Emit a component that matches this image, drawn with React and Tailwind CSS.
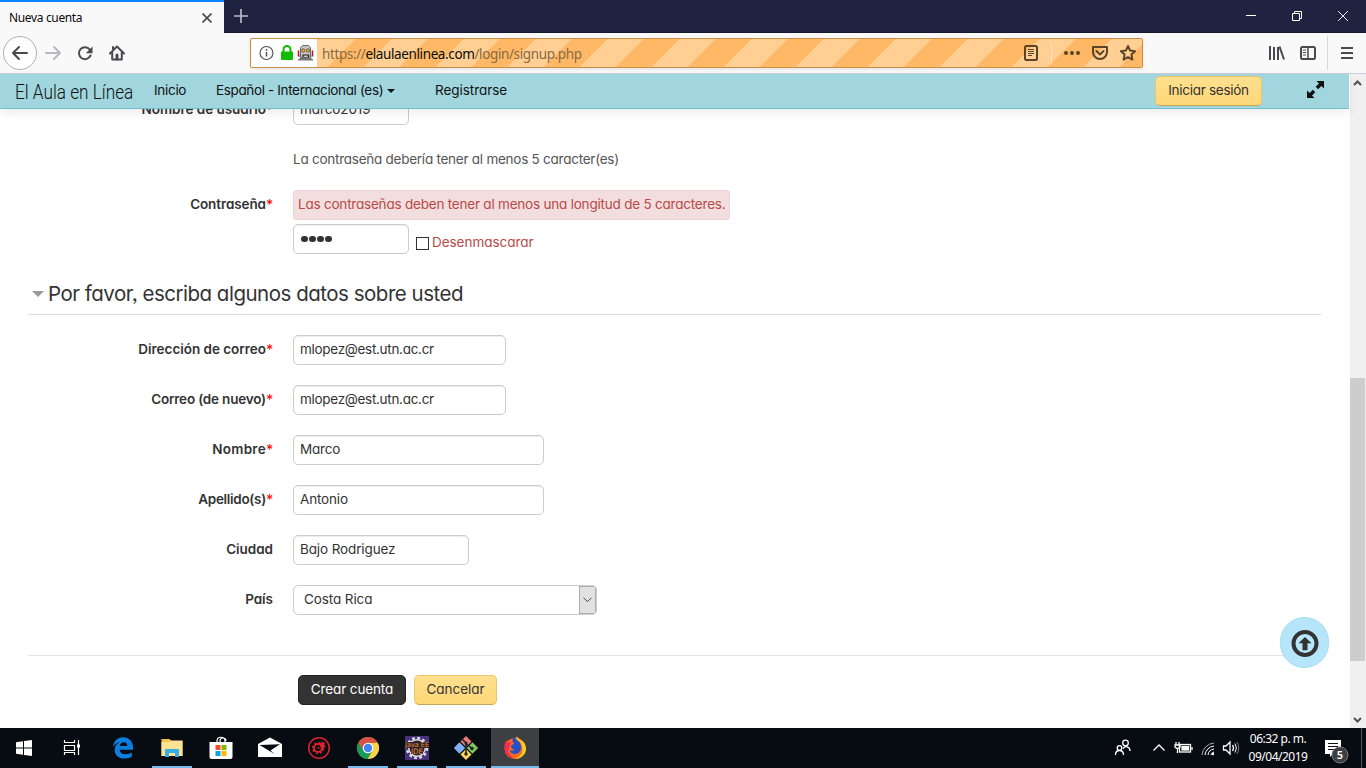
import React from "react";

const pageFont = "font-['Inter'] [font-feature-settings:'cv11','ss03']";

function Label({ children, required = true, track }) {
  return (
    <div className={"w-[273px] shrink-0 text-right text-[13.5px] font-semibold text-[#333] whitespace-nowrap " + (required ? "leading-[27px] " : "leading-[29px] ") + (track || "tracking-[-0.03px]")}>
      {children}
      {required && <span className="inline-block translate-y-px text-[14px] font-medium tracking-[-0.2px] text-[#f11]">*</span>}
    </div>
  );
}

function Input({ children, width, track }) {
  return (
    <div className={"h-[30px] rounded-[5px] border border-[#ccc] bg-white pl-[6px] text-[13.5px] leading-[26px] text-[#333] whitespace-nowrap shadow-[inset_0_1px_1px_rgba(0,0,0,0.075)] " + width + " " + (track || "tracking-[-0.17px]")}>
      {children}
    </div>
  );
}

function Row({ label, required, width, value, track, inputTrack }) {
  return (
    <div className="flex h-[30px] gap-5">
      <Label required={required} track={track}>{label}</Label>
      <Input width={width} track={inputTrack}>{value}</Input>
    </div>
  );
}

function TitleBar() {
  return (
    <div className="flex h-[33px] shrink-0 justify-between border-b border-[#15172c] bg-[#202340]">
      <div className="flex">
        <div className="-mb-px flex h-[33px] w-[224px] items-center justify-between border-t-2 border-[#0a84ff] bg-[#f9f9fa] pl-[9px] pr-[12px]">
          <span className="font-['Noto_Sans'] text-[12px] tracking-[-0.35px] text-[#0c0c0d]">Nueva cuenta</span>
          <svg width="10" height="10" viewBox="0 0 10 10" className="text-[#4a4a4d]"><path d="M.5.500l9 9M9.500.500L.5 9.500" stroke="currentColor" strokeWidth="1.6" /></svg>
        </div>
        <svg width="34" height="32" viewBox="0 0 34 32"><path d="M17 9v14M10 16h14" stroke="#b9bac6" strokeWidth="1.7" /></svg>
      </div>
      <div className="flex text-white">
        <svg width="46" height="32" viewBox="0 0 46 32"><path d="M18 15.500h10" stroke="currentColor" /></svg>
        <svg width="46" height="32" viewBox="0 0 46 32" fill="none" stroke="currentColor"><path d="M18.500 13.500h7v7h-7zM20.500 13.500v-2h7v7h-2" /></svg>
        <svg width="46" height="32" viewBox="0 0 46 32"><path d="M18 11l10 10M28 11L18 21" stroke="currentColor" strokeWidth=".9" /></svg>
      </div>
    </div>
  );
}

function Toolbar() {
  return (
    <div className="flex h-[41px] shrink-0 items-center border-b border-[#ccd] bg-[#f9f9fa]">
      <div className="flex w-[250px] items-center">
        <svg width="128" height="40" viewBox="0 0 128 40" fill="none">
          <circle cx="20" cy="20" r="16.500" fill="#fff" stroke="#b1b1b3" />
          <g strokeWidth="2" strokeLinecap="round" strokeLinejoin="round">
            <path d="M27 20H13m6-6l-6 6 6 6" stroke="#4a4a4d" />
            <path d="M46 20h14m-6-6l6 6-6 6" stroke="#b9b9bb" />
            <path d="M89.700 16.500a6 6 0 1 0 .8 6" stroke="#4a4a4d" />
            <path d="M92.500 13.500v6.700h-6.700z" fill="#4a4a4d" stroke="none" />
            <path d="M110 20.500l7-7 7 7" stroke="#4a4a4d" />
            <path d="M112.200 19.500v7h9.600v-7" stroke="#4a4a4d" />
            <path d="M117 26v-4" stroke="#4a4a4d" strokeWidth="3" />
            <path d="M113 14v2" stroke="#4a4a4d" />
          </g>
        </svg>
      </div>
      <div className="flex h-[30px] w-[893px] overflow-hidden rounded-[2px] border border-[#c98f47] bg-white shadow-[0_1px_3px_rgba(0,0,0,0.1)]">
        <svg width="66" height="28" viewBox="0 0 66 28" className="shrink-0" fill="none">
          <circle cx="15.500" cy="14" r="6.500" stroke="#555" strokeWidth="1.200" />
          <path d="M15.500 13v4.500M15.500 10v1.700" stroke="#555" strokeWidth="1.500" />
          <rect x="30" y="12.500" width="12" height="8.500" rx="1" fill="#12bc00" />
          <path d="M32.500 13v-2.500a3.500 3.500 0 0 1 7 0V13" stroke="#12bc00" strokeWidth="2" />
          <path d="M47.500 11.500v6M61.500 11.500v6" stroke="#c3122d" strokeWidth="1.600" />
          <path d="M48 17h3M58 17h3" stroke="#777" />
          <path d="M49.500 8.500l2-2h6l2 2v10h-10z" fill="#c4c4c4" stroke="#666" />
          <circle cx="52.300" cy="11.500" r="1.700" fill="#f5a623" stroke="#444" strokeWidth=".7" />
          <circle cx="57" cy="11.500" r="1.700" fill="#f5a623" stroke="#444" strokeWidth=".7" />
          <path d="M52 18v-2h5.500v2" stroke="#222" strokeWidth="1.200" />
          <path d="M47 21.500h15v-1l-2-1.500h-11l-2 1.500z" fill="#777" />
        </svg>
        <div className="flex flex-1 items-center justify-between bg-[repeating-linear-gradient(135deg,#ffb966_0px,#ffb966_1.6px,#ffcf94_1.6px,#ffcf94_27px,#ffb966_27px,#ffb966_50.9px)] pl-[5px]">
          <span className="pt-[2px] font-['Noto_Sans'] text-[13.5px] text-[#8a6a43] tracking-[-0.38px] whitespace-nowrap">
            https://<span className="text-[#0c0c0d]">elaulaenlinea.com</span>/login/signup.php
          </span>
          <svg width="121" height="28" viewBox="0 0 121 28" fill="none" stroke="#5c4426" strokeWidth="2" strokeLinejoin="round">
            <rect x="4" y="7" width="12" height="14" rx="1.500" />
            <path d="M7 10.500h6M7 12.500h6M7 14.500h6M7 16.500h4" strokeWidth="1" />
            <path d="M30.500 3v22" stroke="#ffe2bd" strokeWidth="1" />
            <g fill="#5c4426" stroke="none"><circle cx="45" cy="14" r="2" /><circle cx="51" cy="14" r="2" /><circle cx="57" cy="14" r="2" /></g>
            <path d="M72 8h14v5a7 7 0 0 1-14 0z" />
            <path d="M75.500 12l3.500 3.500 3.500-3.500" strokeLinecap="round" />
            <path d="M107 7l2.100 4.600 5 .6-3.700 3.400 1 5-4.400-2.500-4.400 2.500 1-5-3.700-3.400 5-.6z" />
          </svg>
        </div>
      </div>
      <svg width="223" height="40" viewBox="0 0 223 40" fill="none" stroke="#4a4a4d" strokeWidth="2">
        <path d="M127 13v14M131 14v13M135 14v13M136.500 13.500l4.500 13" />
        <rect x="158" y="14" width="14" height="12" rx="1.500" />
        <path d="M165 14v12" strokeWidth="1.500" /><path d="M160 17h3M160 19.500h3M160 22h3" strokeWidth="1" />
        <path d="M184.500 3v34" stroke="#d8d8da" strokeWidth="1" />
        <path d="M198 15h12M198 20h12M198 25h12" />
      </svg>
    </div>
  );
}

function NavBar() {
  return (
    <div className={"z-10 flex h-[35px] shrink-0 items-center border-b border-[#6fc0cc] bg-[#a1d6de] text-[13.5px] leading-[20px] text-[#111] shadow-[0_4px_10px_rgba(0,0,0,0.08)] whitespace-nowrap " + pageFont}>
      <div className="ml-[15px] w-[139px] pt-[2px]">
        <div className="w-[150px] origin-left scale-x-[0.86] font-['Roboto'] text-[20px] font-light">El Aula en Línea</div>
      </div>
      <div className="w-[62px] pb-[2px] tracking-[-0.3px]">Inicio</div>
      <div className="flex w-[219px] items-center gap-[4px] pb-[2px] tracking-[-0.36px]">
        Español - Internacional (es)
        <svg width="8" height="4" viewBox="0 0 8 4" className="mt-[2px]"><path d="M0 0h8L4 4z" fill="#111" /></svg>
      </div>
      <div className="flex-1 pb-[2px] tracking-[-0.05px]">Registrarse</div>
      <div className="mr-[44px] h-[30px] w-[107px] rounded-[5px] border border-[#e9c669] border-b-[#c3a757] bg-linear-to-b from-[#ffe08f] to-[#ffd877] text-center leading-[26px] tracking-[-0.28px] text-[#333]">Iniciar sesión</div>
      <svg width="19" height="19" viewBox="0 0 19 19" className="mr-[24px] mb-[3px]" fill="#111">
        <path d="M10.500 1H18v7.500l-2.600-2.600-3.300 3.300-2.400-2.400 3.300-3.300zM8.500 18H1v-7.500l2.600 2.600 3.300-3.300 2.400 2.400L6 15.500z" />
      </svg>
    </div>
  );
}

function SignupForm() {
  return (
    <div className={"flex min-h-0 flex-1 flex-col overflow-hidden bg-white text-[13.5px] text-[#333] " + pageFont}>
      <div className="-mt-[14px] shrink-0"><Row label="Nombre de usuario" value="marco2019" width="w-[116px]" inputTrack="tracking-[-0.1px]" /></div>
      <div className="mt-[20px] ml-[293px] h-[30px] leading-[28px] tracking-[-0.25px] text-[#555]">La contraseña debería tener al menos 5 caracter(es)</div>
      <div className="mt-[15px] flex h-[64px] gap-5">
        <Label track="tracking-[-0.1px]">Contraseña</Label>
        <div className="text-[#b94a48]">
          <div className="h-[30px] w-[437px] rounded-[3px] border border-[#eed3d7] bg-[#f2dede] pl-[4px] leading-[26px] tracking-[-0.21px] whitespace-nowrap">Las contraseñas deben tener al menos una longitud de 5 caracteres.</div>
          <div className="mt-[4px] flex">
            <div className="flex h-[30px] w-[116px] items-center gap-[1.5px] rounded-[5px] border border-[#ccc] pl-[7px] shadow-[inset_0_1px_1px_rgba(0,0,0,0.075)]">
              {[0, 1, 2, 3].map((i) => <span key={i} className="size-[6.5px] rounded-full bg-[#333]" />)}
            </div>
            <div className="mt-[13px] ml-[7px] size-[13px] border border-[#333] bg-white" />
            <div className="ml-[3px] pt-[4px] leading-[28px] tracking-[-0.04px]">Desenmascarar</div>
          </div>
        </div>
      </div>
      <div className="mt-[21px] mr-[28px] ml-[28px] flex h-[40px] shrink-0 items-center border-b border-[#ddd] pl-[4px] text-[20.5px]">
        <svg width="12" height="7" viewBox="0 0 12 7" className="mr-[4px]"><path d="M0 0h12L6 6z" fill="#999" /></svg>
        <span className="-mt-px tracking-[-0.49px]">Por favor, escriba algunos datos sobre usted</span>
      </div>
      <div className="mt-[20px] flex flex-col gap-[20px]">
        <Row label="Dirección de correo" value="mlopez@est.utn.ac.cr" width="w-[213px]" inputTrack="tracking-[-0.3px]" />
        <Row label="Correo (de nuevo)" value="mlopez@est.utn.ac.cr" width="w-[213px]" track="tracking-[-0.2px]" inputTrack="tracking-[-0.3px]" />
        <Row label="Nombre" value="Marco" width="w-[251px]" track="tracking-[0.25px]" />
        <Row label="Apellido(s)" value="Antonio" width="w-[251px]" track="tracking-[-0.3px]" />
        <Row label="Ciudad" required={false} value="Bajo Rodriguez" width="w-[176px]" inputTrack="tracking-[-0.12px]" />
        <div className="flex h-[30px] gap-5">
          <Label required={false}>País</Label>
          <div className="flex h-[30px] w-[304px] justify-between overflow-hidden rounded-[5px] border border-[#ccc] pl-[10px] leading-[26px] tracking-[-0.1px]">
            Costa Rica
            <div className="flex w-[17px] items-center justify-center border border-[#adadad] bg-[#e1e1e1]">
              <svg width="9" height="6" viewBox="0 0 9 6" fill="none" stroke="#444"><path d="M.5.7l4 4 4-4" /></svg>
            </div>
          </div>
        </div>
      </div>
      <div className="mx-[28px] mt-[40px] flex gap-2 border-t border-[#e5e5e5] pt-[19px] pl-[270px] text-center leading-[26px]">
        <div className="h-[30px] w-[108px] rounded-[5px] border border-[#222] bg-[#333] tracking-[-0.12px] text-white">Crear cuenta</div>
        <div className="h-[30px] w-[83px] rounded-[5px] border border-[#e9c669] border-b-[#c3a757] bg-linear-to-b from-[#ffe08f] to-[#ffd877] tracking-[-0.05px]">Cancelar</div>
      </div>
    </div>
  );
}

function ScrollBar() {
  return (
    <div className="flex w-[17px] shrink-0 flex-col items-center justify-between border-l border-white bg-[#f0f0f0]">
      <svg width="16" height="17" viewBox="0 0 16 17" fill="none" stroke="#505050" strokeWidth="2"><path d="M4 11l3.500-3.500L11 11" /></svg>
      <div className="mt-[287px] mb-auto h-[283px] w-[15px] self-start bg-[#cdcdcd]" />
      <svg width="16" height="17" viewBox="0 0 16 17" fill="none" stroke="#505050" strokeWidth="2"><path d="M4 7l3.500 3.500L11 7" /></svg>
    </div>
  );
}

function Task({ children, open, active }) {
  return (
    <div className={"flex h-[40px] w-[48px] flex-col items-center " + (active ? "bg-[#3d3f43]" : "")}>
      <svg width="48" height="38" viewBox="0 0 48 38" fill="none" className="shrink-0">{children}</svg>
      {open && <div className={"h-[2px] bg-[#76b9ed] " + (active ? "w-[48px]" : "w-[40px]")} />}
    </div>
  );
}

function TaskBar() {
  return (
    <div className="flex h-[40px] shrink-0 justify-between bg-[#070b12] text-white">
      <div className="flex">
        <Task><path d="M16 14.200l7-1v6.300h-7zM24 13l8-1.100v7.600h-8zM16 20.500h7v6.300l-7-1zM24 20.500h8V28l-8-1.100z" fill="#fff" /></Task>
        <Task><path d="M16.500 12v2.500h10V12M16.500 27v-2.500h10V27M16.500 17.500h10v5h-10zM30.500 12v15" stroke="#fff" strokeWidth="1.200" /><rect x="29" y="16.500" width="3" height="3" fill="#fff" /></Task>
        <div className="ml-[3px] flex gap-px">
          <Task><path d="M14 19c.6-6 4.600-9.800 10-9.800 6.200 0 10 4.300 10 10v2.500H20.600c.3 3.300 3 4.500 6 4.500 2.400 0 4.500-.6 6.200-1.600v4.200c-2 1.100-4.300 1.700-7.300 1.700-6 0-9.800-3.400-9.800-8.600 0-3.600 1.900-6.400 5.200-8-3 .5-5.300 2.400-6.900 5.100zm6.700-1h7.600c0-2.400-1.200-3.800-3.500-3.800-2.100 0-3.600 1.400-4.100 3.800z" fill="#0b7fe0" /></Task>
          <Task open><path d="M13.500 11h8l2 2h11v15h-21z" fill="#f3c04b" /><path d="M13.500 14h7l2-1.500h12V28h-21z" fill="#ffe394" /><path d="M17 29v-7q0-1 1-1h12q1 0 1 1v7h-4v-4h-6v4z" fill="#38aee8" /></Task>
          <Task><path d="M20 14v-1c0-5 8-5 8 0v1M23 14v-1c0-4 6-4 6 0" stroke="#fff" strokeWidth="1.200" /><path d="M12.500 14h23v15q0 2-2 2h-19q-2 0-2-2z" fill="#fff" /><path d="M18.500 17h5v5h-5z" fill="#f25022" /><path d="M24.500 17h5v5h-5z" fill="#7fba00" /><path d="M18.500 23h5v5h-5z" fill="#00a4ef" /><path d="M24.500 23h5v5h-5z" fill="#ffb900" /></Task>
          <Task><path d="M12 16l12-6.500L36 16v13H12z" fill="#fff" /><path d="M13.500 17l20.500-.8-9.500 6.300 4 3.500z" fill="#070b12" /></Task>
          <Task>
            <circle cx="24" cy="20" r="10.300" stroke="#d9232b" strokeWidth="1.500" />
            <circle cx="23" cy="20" r="4" stroke="#d9232b" strokeWidth="2" />
            <circle cx="23" cy="20" r="5.400" stroke="#d9232b" strokeWidth="1.500" strokeDasharray="2 2.200" />
            <path d="M25 15.500c1-1.500 3-1.500 5-1l-1 2 2 2-2 1-1 4-2-3z" fill="#d9232b" />
            <circle cx="23.500" cy="20" r="1" fill="#d9232b" />
          </Task>
          <Task open><circle cx="24" cy="20" r="11" fill="#34a853" /><path d="M24 14.700h9.700A11 11 0 0 1 23.500 31l5-8.500z" fill="#fdd04b" /><path d="M14.500 14.500A11 11 0 0 0 23.500 31l5-8.500-9-1z" fill="#179b56" /><path d="M24 9a11 11 0 0 1 9.700 5.700H24l-4.600 8L14.500 14.500A11 11 0 0 1 24 9z" fill="#dc4f43" /><circle cx="24" cy="20" r="5.300" fill="#fff" /><circle cx="24" cy="20" r="4.200" fill="#4285f4" /></Task>
          <Task open>
            <rect x="12" y="8" width="24" height="24" fill="#49307a" />
            <circle cx="24" cy="20" r="10" stroke="#ddd" strokeWidth="2.500" strokeDasharray="2.800 2.430" /><circle cx="24" cy="20" r="8.300" fill="#2b2430" stroke="#ddd" strokeWidth="1.500" />
            <path d="M12 14h24v6H12zM18 20h12v6H18z" fill="#2b2430" />
            <text x="12" y="19.300" fontSize="7" textLength="24" lengthAdjust="spacingAndGlyphs" fill="#f08a2c" fontFamily="DejaVu Sans">Java EE</text>
            <text x="18" y="25.800" fontSize="7.500" textLength="12" lengthAdjust="spacingAndGlyphs" fill="#f08a2c" fontFamily="DejaVu Sans">IDE</text>
          </Task>
          <Task open>
            <path d="M24 8l5.500 5.500-5.500 5.500-5.500-5.500z" fill="#f07878" /><path d="M17.500 14.300l5.700 5.700-5.700 5.700L11.800 20z" fill="#7fb2f5" /><path d="M30.500 14.300l5.700 5.700-5.700 5.700-5.700-5.700z" fill="#7cc55c" /><path d="M24 21l5.500 5.500L24 32l-5.500-5.500z" fill="#fbd75b" />
            <path d="M19.500 10.500l4.500 4.500v11M24 15.500l5.500 4.500" stroke="#20242a" strokeWidth="1.500" /><circle cx="24" cy="26" r="1.700" fill="#222" /><circle cx="30" cy="20.500" r="1.700" fill="#222" /><circle cx="24" cy="15" r="1.500" fill="#222" />
          </Task>
          <Task open active>
            <circle cx="24" cy="20.500" r="10.500" fill="#ff6a20" /><path d="M24 10.500c7 0 11 4.500 11 10.500 0 5.500-5 10-11 10 4.500-2 8-5.500 7.500-10.500C31 16 28 12.500 24 10.500z" fill="#ffcf24" />
            <path d="M13.500 17l1.500-5 1.500 2.500L20 14l-3 10 5 6.500c-5-1-9-5.500-8.500-13.500z" fill="#f52b55" />
            <path d="M22 9.500c4 .5 7 4 8 8 .8 4-1.500 8-5.500 8.500-3 .3-5.500-1.500-6-4 2 1.200 3.500 1 5-.5-2 0-3.500-1-3.500-3.500 0-1.500 2-1.500 3.500-2-2-1.500-2.500-4-1.500-6.500z" fill="#274fc4" /><path d="M25 8.500c4 2 7.500 5.500 7.500 11-1-3.500-3-6-5.500-6.500-1.500-1-2-2.500-2-4.500z" fill="#ffb324" />
          </Task>
        </div>
      </div>
      <div className="flex items-center">
        <svg width="134" height="40" viewBox="0 0 134 40" fill="none" stroke="#fff" strokeWidth="1.300" className="mr-[6px]">
          <circle cx="17.500" cy="15" r="2.800" /><circle cx="11.500" cy="20" r="2.300" /><path d="M7.500 27c0-6 8-6 8 0M15 20.500c2.500-3.500 7-1.500 7 2.500" />
          <path d="M45.500 22.500l5.500-5.500 5.500 5.500" />
          <rect x="71.500" y="16.500" width="11" height="7.500" /><rect x="74" y="18.500" width="6.500" height="3.500" fill="#fff" /><path d="M84 19v3M68 14v3M71 14v3M67 17h5v2q-2.500 3-5 0zM69.500 20v5" />
          <g strokeWidth="1"><path d="M94 27A13 13 0 0 1 106 15" opacity=".65" /><path d="M97 27a10 10 0 0 1 9-9" /><path d="M100 27a7 7 0 0 1 6-6" /><path d="M103 27a4 4 0 0 1 3-3" /></g><circle cx="105" cy="26" r="1.200" fill="#fff" stroke="none" />
          <path d="M115.500 18h2.500l4-4v12l-4-4h-2.500zM124.500 17q2 3 0 6" /><path d="M127 15.500q2.800 4.500 0 9" strokeWidth="1" /><path d="M129 14q3.500 6 0 12" stroke="#777" strokeWidth="1" />
        </svg>
        <div className="w-[60px] text-center font-['Noto_Sans'] text-[12px] leading-[18px] tracking-[-0.5px] whitespace-nowrap">
          <div>06:32 p. m.</div>
          <div>09/04/2019</div>
        </div>
        <svg width="58" height="40" viewBox="0 0 58 40">
          <path d="M17 12h16v14h-8l-3 3v-3h-5z" fill="#fff" /><path d="M20 15.500h10M20 18.500h10M20 21.500h7" stroke="#111" />
          <circle cx="32" cy="27" r="8" fill="#3b3e42" stroke="#777" /><text x="32" y="31" fontSize="11" textAnchor="middle" fill="#fff" fontFamily="Noto Sans" fontWeight="600">5</text>
          <path d="M53.500 0v40" stroke="#555" />
        </svg>
      </div>
    </div>
  );
}

export default function App() {
  return (
    <div className="relative flex h-[768px] w-[1366px] flex-col overflow-hidden bg-white">
      <TitleBar />
      <Toolbar />
      <div className="flex min-h-0 flex-1">
        <div className="flex w-[1349px] flex-col">
          <NavBar />
          <SignupForm />
        </div>
        <ScrollBar />
      </div>
      <TaskBar />
      <div className="absolute top-[617px] left-[1280px] flex h-[51px] w-[49px] items-center justify-center rounded-full border border-[#a2ddf5] bg-[#b7e6fa]">
        <svg width="28" height="28" viewBox="0 0 28 28" fill="none"><circle cx="14" cy="14.500" r="11.500" stroke="#333" strokeWidth="4" /><path d="M14 8l6.500 6.300h-4v7h-5v-7h-4z" fill="#333" /></svg>
      </div>
    </div>
  );
}
